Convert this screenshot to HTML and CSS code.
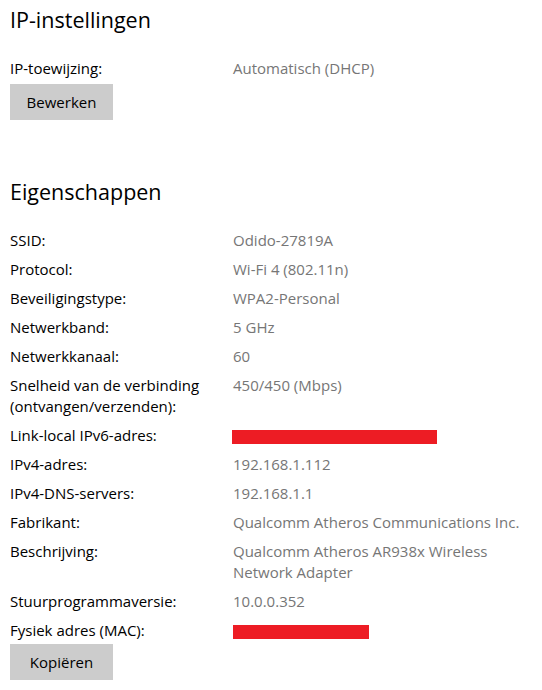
FILE: index.html
```html
<!DOCTYPE html>
<html lang="nl">
<head>
<meta charset="utf-8">
<title>IP-instellingen</title>
<link rel="stylesheet" href="styles.css">
</head>
<body>
<main class="page">
  <section class="section">
    <h1 class="heading">IP-instellingen</h1>
    <div class="props">
      <div class="label">IP-toewijzing:</div><div class="value">Automatisch (DHCP)</div>
    </div>
    <button class="btn">Bewerken</button>
  </section>
  <section class="section section-props">
    <h1 class="heading">Eigenschappen</h1>
    <div class="props">
      <div class="label">SSID:</div><div class="value">Odido-27819A</div>
      <div class="label">Protocol:</div><div class="value">Wi-Fi 4 (802.11n)</div>
      <div class="label">Beveiligingstype:</div><div class="value">WPA2-Personal</div>
      <div class="label">Netwerkband:</div><div class="value">5 GHz</div>
      <div class="label">Netwerkkanaal:</div><div class="value">60</div>
      <div class="label">Snelheid van de verbinding (ontvangen/verzenden):</div><div class="value">450/450 (Mbps)</div>
      <div class="label">Link-local IPv6-adres:</div><div class="value"><span class="redact redact-ipv6"></span></div>
      <div class="label">IPv4-adres:</div><div class="value">192.168.1.112</div>
      <div class="label">IPv4-DNS-servers:</div><div class="value">192.168.1.1</div>
      <div class="label">Fabrikant:</div><div class="value">Qualcomm Atheros Communications Inc.</div>
      <div class="label">Beschrijving:</div><div class="value">Qualcomm Atheros AR938x Wireless Network Adapter</div>
      <div class="label">Stuurprogrammaversie:</div><div class="value">10.0.0.352</div>
      <div class="label">Fysiek adres (MAC):</div><div class="value"><span class="redact redact-mac"></span></div>
    </div>
    <button class="btn btn-last">Kopiëren</button>
  </section>
</main>
</body>
</html>
```
FILE: styles.css
```css
html, body {
  margin: 0;
  padding: 0;
  background: #ffffff;
}
body {
  font-family: "Open Sans", "Noto Sans", sans-serif;
  font-size: 15px;
  color: #000000;
}
.page {
  padding: 6px 10px 0 10px;
}
.section {
  display: flex;
  flex-direction: column;
  align-items: flex-start;
}
.section-props {
  margin-top: 58px;
}
.heading {
  margin: 0 0 24px 0;
  font-size: 21.5px;
  font-weight: 400;
  line-height: 28px;
}
.props {
  display: grid;
  grid-template-columns: 223px 292px;
  row-gap: 8px;
  line-height: 21px;
}
.label {
  width: 210px;
}
.value {
  color: #767676;
}
.redact {
  display: inline-block;
  background: #ed1c24;
  height: 14px;
  vertical-align: middle;
}
.redact-ipv6 { width: 205px; margin-left: -1px; }
.redact-mac { width: 136px; }
.btn {
  margin-top: 5px;
  width: 103px;
  height: 36px;
  border: none;
  background: #cccccc;
  font-family: inherit;
  font-size: 15px;
  color: #000000;
  padding: 0;
}
.btn-last {
  margin-top: 3px;
}
```
